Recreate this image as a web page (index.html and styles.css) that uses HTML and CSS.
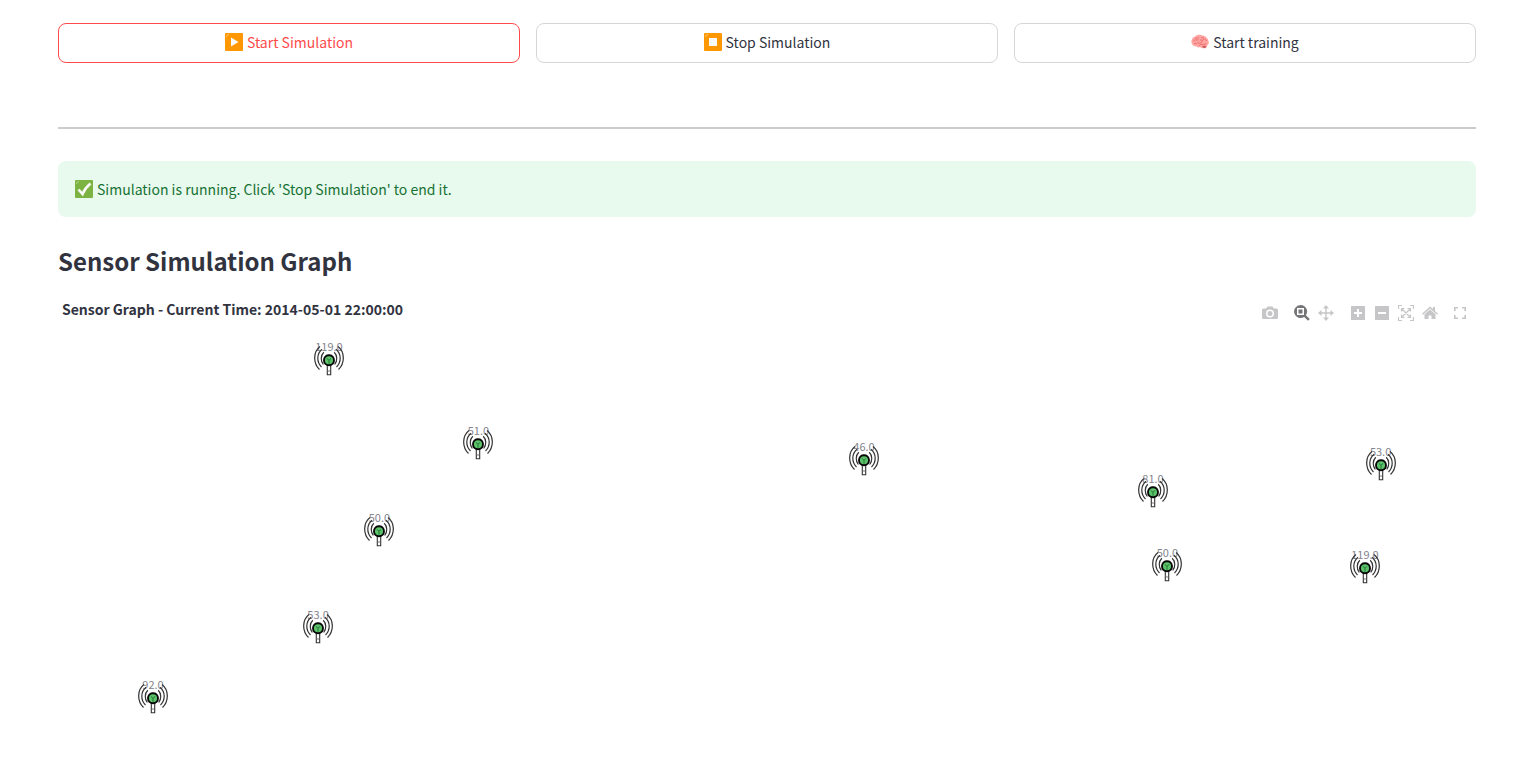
FILE: index.html
```html
<!DOCTYPE html>
<html lang="en">
<head>
<meta charset="utf-8">
<meta name="viewport" content="width=device-width, initial-scale=1">
<title>Sensor Simulation</title>
<link rel="stylesheet" href="styles.css">
</head>
<body>
<svg class="defs" aria-hidden="true">
  <symbol id="sensor" viewBox="0 0 30 32">
    <g fill="none" stroke="#333" stroke-width="1.200">
      <path d="M6 2.500C-1 8-1 19 5.500 25.500"/>
      <path d="M8 5.300C2.500 10 2.500 18 7.500 23"/>
      <path d="M9.800 8.300C6.500 11.500 6.500 17 9.300 20.500"/>
      <path d="M24 2.500C31 8 31 19 24.500 25.500"/>
      <path d="M22 5.300C27.500 10 27.500 18 22.500 23"/>
      <path d="M20.200 8.300C23.500 11.500 23.500 17 20.700 20.500"/>
    </g>
    <path d="M13.300 21h3.400v9.800h-3.400z" fill="#fff" stroke="#333" stroke-width="1.100"/>
    <path d="M13.500 27h3" stroke="#555" stroke-width=".8"/>
    <path d="M10.500 13l1.800-2.300h5.400l1.800 2.300z" fill="#111"/>
    <circle cx="15" cy="16.300" r="5" fill="#5cc36b" stroke="#080808" stroke-width="1.900"/>
    <path d="M12.800 14.300l2.200 2 2.200-2M15 16.300v3.500" fill="none" stroke="#1d6b2e" stroke-width=".9"/>
  </symbol>
</svg>
<main class="page">
  <div class="actions">
    <button class="action action-active" type="button">
      <svg class="emoji" viewBox="0 0 18 18" aria-hidden="true"><rect width="18" height="18" rx="1" fill="#ff9800"/><path d="M1.500 4q0-2.500 2.500-2.500" fill="none" stroke="#ffc36b"/><path d="M6 4.500v9l7.500-4.500z" fill="#fafafa"/></svg>
      <span>Start Simulation</span>
    </button>
    <button class="action" type="button">
      <svg class="emoji" viewBox="0 0 18 18" aria-hidden="true"><rect width="18" height="18" rx="1" fill="#ff9800"/><path d="M1.500 4q0-2.500 2.500-2.500" fill="none" stroke="#ffc36b"/><rect x="5" y="5" width="8" height="8" fill="#fafafa"/></svg>
      <span>Stop Simulation</span>
    </button>
    <button class="action" type="button">
      <svg class="emoji" viewBox="0 0 18 18" aria-hidden="true"><path d="M1 11C-.5 8 1 4.500 4 3.500 6 1.500 9 1.500 11 2.500c3 0 6 2.500 6.500 5.500.8 2-.3 4-1.500 4.500.3 2-1.500 3.500-3 2.500-1.500.8-3 .2-3.500-1-2 .8-3.500.3-4.500-.7-1.500.2-3-.8-4-2.300z" fill="#ffa4a0"/><path d="M2.500 8.500q1-2.500 3-1.500T7 4M5 11q1-2 3-1t3-1.500 2-2.500M10 4.500q2-.5 3 1t3 2M8 12.500q2-2 4-1t3-1.500M4 5l2 .5M9 7h2M3 11l2-1" fill="none" stroke="#e4686c" stroke-width=".8"/><path d="M11 13.500q2-1 4-.5-.3 2.500-2 2z" fill="#c9555c"/></svg>
      <span>Start training</span>
    </button>
  </div>
  <hr class="divider">
  <div class="notice" role="status">
    <svg class="emoji" viewBox="0 0 18 18" aria-hidden="true"><rect width="18" height="18" rx="1" fill="#7cb342"/><path d="M1.500 4q0-2.500 2.500-2.500" fill="none" stroke="#aed581"/><path d="M3.500 9.500l4 4.500q2.500-6 8-10.500" fill="none" stroke="#fafafa" stroke-width="2.600"/></svg>
    <span>Simulation is running. Click 'Stop Simulation' to end it.</span>
  </div>
  <h2 class="heading">Sensor Simulation Graph</h2>
  <section class="chart" aria-labelledby="chart-title">
    <header class="chart-header">
      <h3 class="chart-title" id="chart-title">Sensor Graph - Current Time: 2014-05-01 22:00:00</h3>
      <div class="modebar">
        <button class="tool" type="button" aria-label="Download plot"><svg viewBox="0 0 16 16"><path fill-rule="evenodd" d="M1.500 3.500h2.700L5.500 1.500h5l1.300 2h2.700q1.500 0 1.500 1.500v7.500q0 1.500-1.500 1.500h-13Q0 14 0 12.500V5q0-1.500 1.500-1.500zM8 4.500a4 4 0 1 0 0 8 4 4 0 0 0 0-8zm0 1.500a2.500 2.500 0 1 1 0 5 2.500 2.500 0 0 1 0-5z"/></svg></button>
        <button class="tool tool-group tool-active" type="button" aria-label="Zoom"><svg viewBox="0 0 16 16"><path fill-rule="evenodd" d="M6.500 0a6.500 6.500 0 0 1 5.400 10.200l3.900 3.900-1.700 1.700-3.900-3.900A6.500 6.500 0 1 1 6.500 0zM3 3v7h7V3zm1.500 1.500h4v4h-4z"/></svg></button>
        <button class="tool" type="button" aria-label="Pan"><svg viewBox="0 0 16 16"><path d="M8 0l3 3.500H8.700v3.800h3.800V5L16 8l-3.500 3V8.700H8.700v3.800H11L8 16l-3-3.500h2.300V8.700H3.500V11L0 8l3.500-3v2.300h3.800V3.500H5z"/></svg></button>
        <button class="tool tool-group" type="button" aria-label="Zoom in"><svg viewBox="0 0 16 16"><path fill-rule="evenodd" d="M1 1h14v14H1zM7 4v3H4v2h3v3h2V9h3V7H9V4z"/></svg></button>
        <button class="tool" type="button" aria-label="Zoom out"><svg viewBox="0 0 16 16"><path fill-rule="evenodd" d="M1 1h14v14H1zM4 7v2h8V7z"/></svg></button>
        <button class="tool" type="button" aria-label="Autoscale"><svg viewBox="0 0 16 16"><path d="M.5 4V.5H4M12 .5h3.500V4M15.500 12v3.500H12M4 15.500H.5V12M4 4l8 8M12 4l-8 8M3.500 6.500v-3h3M9.500 3.500h3v3M12.500 9.500v3h-3M6.500 12.500h-3v-3" fill="none" stroke="currentColor" stroke-width="1.200"/></svg></button>
        <button class="tool" type="button" aria-label="Reset axes"><svg viewBox="0 0 16 16"><path d="M8 4.500l5.500 4.800V14H9.500v-3.500h-3V14h-4V9.300zM8 1.500l3 2.500V2h2v4l3 2.700-1 1.100L8 3.500 1 9.800 0 8.700z"/></svg></button>
        <button class="tool tool-last" type="button" aria-label="Fullscreen"><svg viewBox="0 0 16 16"><path d="M2.800 6V2.800H6M10 2.800h3.200V6M13.200 10v3.200H10M6 13.200H2.800V10" fill="none" stroke="currentColor" stroke-width="1.600"/></svg></button>
      </div>
    </header>
    <div class="sensor" style="left:19.11%;top:15.78%"><span class="reading">119.0</span><svg class="antenna"><use href="#sensor"/></svg></div>
    <div class="sensor" style="left:29.65%;top:34.45%"><span class="reading">51.0</span><svg class="antenna"><use href="#sensor"/></svg></div>
    <div class="sensor" style="left:56.84%;top:38%"><span class="reading">46.0</span><svg class="antenna"><use href="#sensor"/></svg></div>
    <div class="sensor" style="left:77.22%;top:45.11%"><span class="reading">81.0</span><svg class="antenna"><use href="#sensor"/></svg></div>
    <div class="sensor" style="left:93.27%;top:39.11%"><span class="reading">53.0</span><svg class="antenna"><use href="#sensor"/></svg></div>
    <div class="sensor" style="left:22.67%;top:53.78%"><span class="reading">50.0</span><svg class="antenna"><use href="#sensor"/></svg></div>
    <div class="sensor" style="left:78.24%;top:61.56%"><span class="reading">50.0</span><svg class="antenna"><use href="#sensor"/></svg></div>
    <div class="sensor" style="left:92.17%;top:62%"><span class="reading">119.0</span><svg class="antenna"><use href="#sensor"/></svg></div>
    <div class="sensor" style="left:18.34%;top:75.33%"><span class="reading">53.0</span><svg class="antenna"><use href="#sensor"/></svg></div>
    <div class="sensor" style="left:6.7%;top:90.89%"><span class="reading">92.0</span><svg class="antenna"><use href="#sensor"/></svg></div>
  </section>
</main>
</body>
</html>
```
FILE: styles.css
```css
* { box-sizing: border-box; }
body {
  margin: 0;
  background: #fff;
  color: #31333f;
  font-family: "Source Sans Pro", "Noto Sans CJK SC", sans-serif;
  font-size: 14px;
  line-height: 24px;
}
.defs { position: absolute; width: 0; height: 0; }
.page { padding: 23px 50px 28px 58px; }
.actions { display: grid; grid-template-columns: repeat(3, 1fr); gap: 16px; }
.action {
  display: flex;
  align-items: center;
  justify-content: center;
  gap: 4px;
  height: 40px;
  padding: 0 12px 2px;
  border: 1px solid #d6d6d9;
  border-radius: 8px;
  background: #fff;
  color: inherit;
  font: inherit;
  cursor: pointer;
}
.action-active { border-color: #ff4b4b; color: #ff4b4b; }
.emoji { width: 18px; height: 18px; flex: none; }
.divider { height: 2px; margin: 64px 0 32px; border: 0; background: #ccc; }
.notice {
  display: flex;
  align-items: center;
  gap: 4px;
  padding: 16px 17px;
  border-radius: 8px;
  background: #e8f9ee;
  color: #177233;
}
.heading { margin: 28px 0 12px; font-size: 24px; font-weight: 600; line-height: 32px; }
.chart { position: relative; height: 450px; }
.chart-header {
  display: flex;
  justify-content: space-between;
  padding: 8px 8px 0 4px;
}
.chart-title { margin: 0; font-size: 14px; font-weight: 700; line-height: 24px; }
.modebar { display: flex; padding-top: 8px; color: #c6c6c8; }
.tool {
  display: block;
  width: 16px;
  height: 16px;
  margin-left: 8px;
  padding: 0;
  border: 0;
  background: none;
  color: inherit;
  cursor: pointer;
}
.tool svg { display: block; width: 16px; height: 16px; fill: currentColor; }
.tool-group { margin-left: 16px; }
.tool-last { margin-left: 14px; }
.tool-active { color: #757578; }
.sensor {
  position: absolute;
  width: 30px;
  height: 32px;
  transform: translate(-50%, -50%);
}
.antenna { position: absolute; inset: 0; width: 30px; height: 32px; }
.reading {
  position: absolute;
  top: -6px;
  left: 50%;
  color: #83848c;
  font-size: 11px;
  line-height: 16px;
  transform: translateX(-50%);
}
```
